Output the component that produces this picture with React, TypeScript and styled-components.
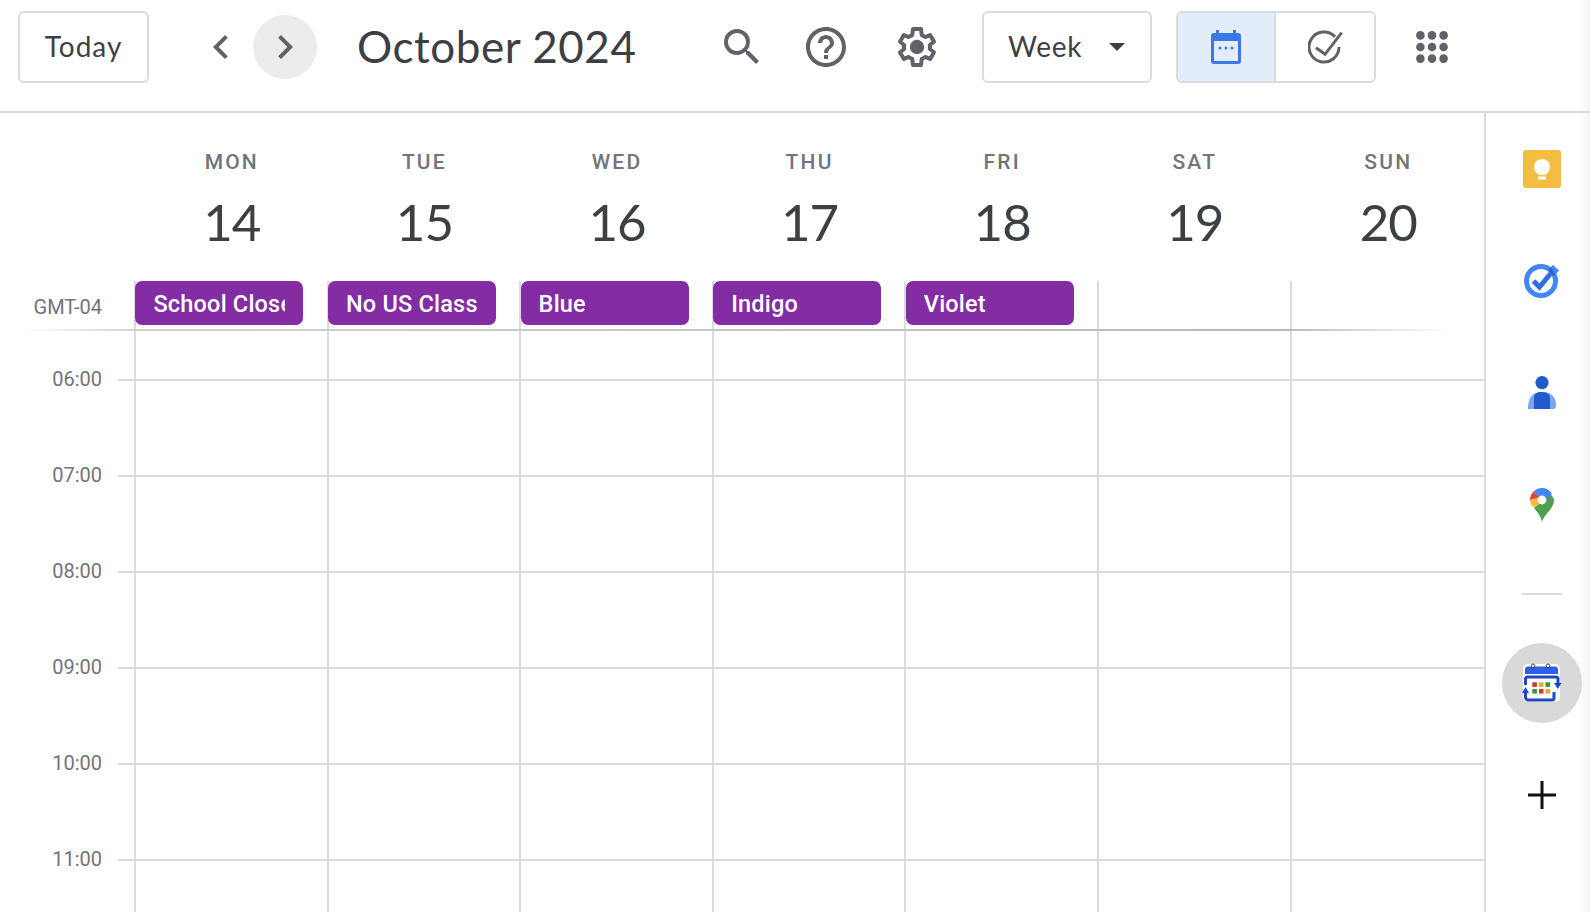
import React from 'react';
import styled, { createGlobalStyle } from 'styled-components';
import { MdChevronLeft, MdChevronRight, MdHelpOutline, MdSearch } from 'react-icons/md';

const GlobalStyle = createGlobalStyle`
  html, body {
    margin: 0;
    padding: 0;
    background: #fff;
    font-family: 'Roboto', 'Liberation Sans', sans-serif;
    overflow: hidden;
  }
`;

const lineColor = `#dadbe1`;
const edgeFade = `linear-gradient(to right, transparent calc(100% - 12px), #f4f4f4)`;
const weekColumns = `134px repeat(6, 192.6px) 1fr`;

const Page = styled.div`
  display: flex;
  flex-direction: column;
  width: 1590px;
  height: 912px;
  overflow: hidden;
`;

const TopBar = styled.header`
  display: flex;
  align-items: center;
  flex: none;
  box-sizing: border-box;
  height: 113px;
  padding: 0 0 17px 18px;
  border-bottom: 2px solid ${lineColor};
  background: ${edgeFade};
`;

const OutlineButton = styled.div<{ $width: number; $gapLeft?: number }>`
  display: flex;
  align-items: center;
  box-sizing: border-box;
  width: ${({ $width }) => $width}px;
  height: 72px;
  margin-left: ${({ $gapLeft = 0 }) => $gapLeft}px;
  border: 2px solid ${lineColor};
  border-radius: 6px;
  color: #3c4043;
  font-family: 'Lato', sans-serif;
  font-size: 28px;
`;

const TodayLabel = styled.span`
  margin: 0 auto 2px;
  letter-spacing: 1px;
`;

const WeekLabel = styled.span`
  margin: 0 0 2px 24px;
  letter-spacing: 0.75px;
`;

const Caret = styled.span`
  margin-left: auto;
  margin-right: 25px;
  width: 0;
  height: 0;
  border-left: 8px solid transparent;
  border-right: 8px solid transparent;
  border-top: 8px solid #3c4043;
`;

const NavButton = styled.div<{ $hover?: boolean; $gapLeft?: number }>`
  display: flex;
  align-items: center;
  justify-content: center;
  width: 64px;
  height: 64px;
  margin-left: ${({ $gapLeft = 0 }) => $gapLeft}px;
  border-radius: 50%;
  color: #5f6368;
  font-size: 48px;
  background: ${({ $hover }) => ($hover ? `#ececec` : `transparent`)};
`;

const Title = styled.h1`
  width: 361px;
  margin: 0 0 2px 40px;
  color: #3c4043;
  font-family: 'Lato', sans-serif;
  font-size: 44px;
  font-weight: 400;
  letter-spacing: 0.55px;
  white-space: nowrap;
`;

const IconButton = styled.div<{ $gapLeft: number }>`
  display: flex;
  align-items: center;
  width: 48px;
  height: 48px;
  margin-left: ${({ $gapLeft }) => $gapLeft}px;
  color: #5f6368;
  font-size: 48px;
`;

const Segmented = styled.div`
  display: flex;
  box-sizing: border-box;
  width: 200px;
  height: 72px;
  margin-left: 24px;
  border: 2px solid ${lineColor};
  border-radius: 6px;
  overflow: hidden;
`;

const Segment = styled.div<{ $active?: boolean }>`
  display: flex;
  align-items: center;
  justify-content: center;
  flex: ${({ $active }) => ($active ? `0 0 96px` : `1`)};
  background: ${({ $active }) => ($active ? `#e3edf9` : `#fff`)};
  & + & {
    border-left: 2px solid ${lineColor};
  }
`;

const Body = styled.div`
  display: flex;
  flex: 1;
  min-height: 0;
`;

const Main = styled.main`
  flex: none;
  width: 1484px;
`;

const DayHeader = styled.div`
  display: grid;
  grid-template-columns: ${weekColumns};
  height: 168px;
`;

const DayHead = styled.div`
  display: flex;
  flex-direction: column;
  align-items: center;
  padding: 37px 0 0 3px;
`;

const DayName = styled.div`
  color: #70757a;
  font-size: 21px;
  font-weight: 500;
  line-height: 24px;
  letter-spacing: 2.2px;
`;

const DayNumber = styled.div`
  margin-top: 18px;
  color: #3c4043;
  font-family: 'Lato', sans-serif;
  font-size: 51px;
  line-height: 60px;
  letter-spacing: -1px;
`;

const AllDayRow = styled.div`
  position: relative;
  display: grid;
  grid-template-columns: ${weekColumns};
  height: 49px;
  &::after {
    content: '';
    position: absolute;
    left: 22px;
    right: 32px;
    bottom: -1px;
    height: 2px;
    background: linear-gradient(
      to right,
      transparent,
      #d2d2d5 8%,
      #c6c6ca 50%,
      #b8b8bc 88%,
      transparent
    );
  }
`;

const ZoneLabel = styled.div`
  box-sizing: border-box;
  width: 102px;
  padding-top: 13px;
  color: #70757a;
  font-size: 20px;
  line-height: 26px;
  text-align: right;
`;

const DayCell = styled.div`
  border-left: 2px solid ${lineColor};
`;

const EventChip = styled.div`
  box-sizing: border-box;
  width: 168px;
  height: 44px;
  margin-left: -0.6px;
  padding: 0 18px;
  border-radius: 7px;
  background: #832ca3;
  color: #fff;
  font-size: 23.5px;
  font-weight: 500;
  line-height: 46px;
  letter-spacing: 0.2px;
`;

const EventText = styled.div`
  overflow: hidden;
  white-space: nowrap;
`;

const HourRow = styled.div<{ $height: number }>`
  display: grid;
  grid-template-columns: ${weekColumns};
  height: ${({ $height }) => $height}px;
`;

const HourGutter = styled.div`
  display: flex;
  align-items: flex-start;
`;

const HourLabel = styled.div`
  flex: none;
  width: 102px;
  margin-top: -13px;
  color: #70757a;
  font-size: 20px;
  line-height: 26px;
  text-align: right;
`;

const HourTick = styled.div`
  flex: 1;
  margin-left: 16px;
  border-top: 2px solid ${lineColor};
`;

const HourCell = styled.div<{ $lined: boolean }>`
  border-left: 2px solid ${lineColor};
  border-top: ${({ $lined }) => ($lined ? `2px solid ${lineColor}` : `none`)};
`;

const SidePanel = styled.aside`
  display: flex;
  flex-direction: column;
  align-items: center;
  flex: none;
  box-sizing: border-box;
  width: 106px;
  border-left: 2px solid ${lineColor};
  padding: 36px 0 0 8px;
  background: ${edgeFade};
`;

const SideSlot = styled.div<{ $gapTop?: number }>`
  display: flex;
  align-items: center;
  justify-content: center;
  height: 40px;
  margin-top: ${({ $gapTop = 0 }) => $gapTop}px;
`;

const SideDivider = styled.div`
  flex: none;
  width: 40px;
  height: 2px;
  margin: 68px 0 48px;
  background: ${lineColor};
`;

const ActiveAddon = styled.div`
  display: flex;
  align-items: center;
  justify-content: center;
  flex: none;
  width: 80px;
  height: 80px;
  border-radius: 50%;
  background: #d9d9d9;
`;

const days = [
  { name: `MON`, date: 14, event: `School Closed` },
  { name: `TUE`, date: 15, event: `No US Class` },
  { name: `WED`, date: 16, event: `Blue` },
  { name: `THU`, date: 17, event: `Indigo` },
  { name: `FRI`, date: 18, event: `Violet` },
  { name: `SAT`, date: 19 },
  { name: `SUN`, date: 20 },
];

const hours = [`06:00`, `07:00`, `08:00`, `09:00`, `10:00`, `11:00`];

function GearIcon() {
  return (
    <svg width="48" height="48" viewBox="0 0 24 24">
      <path
        fill="none"
        stroke="#5f6368"
        strokeWidth="2"
        strokeLinejoin="round"
        d="M18.4 12.98c.06-.32.1-.64.1-.98s-.04-.66-.1-.98l2.1-1.65-1.94-3.36-2.49 1c-.52-.4-1.08-.73-1.69-.98L14 3h-4l-.38 3.03c-.61.25-1.17.59-1.69.98l-2.49-1L3.5 9.37l2.1 1.65c-.06.32-.1.65-.1.98s.04.66.1.98L3.5 14.63l1.94 3.36 2.49-1c.52.4 1.08.73 1.69.98L10 21h4l.38-3.03c.61-.25 1.17-.59 1.69-.98l2.49 1 1.94-3.36z"
      />
      <circle cx="12" cy="12" r="3.6" fill="#5f6368" />
    </svg>
  );
}

function AppsIcon() {
  const spots = [0, 1, 2];
  return (
    <svg width="32" height="32" viewBox="0 0 32 32">
      {spots.map((row) =>
        spots.map((col) => (
          <circle
            key={`${row}-${col}`}
            cx={4.4 + col * 11.6}
            cy={4.4 + row * 11.6}
            r="4.3"
            fill="#5f6368"
          />
        )),
      )}
    </svg>
  );
}

function CalendarIcon() {
  return (
    <svg width="30" height="34" viewBox="0 0 30 34">
      <rect x="5" y="0" width="3" height="6" fill="#3b78e7" />
      <rect x="22" y="0" width="3" height="6" fill="#3b78e7" />
      <path
        fill="#3b78e7"
        d="M3 3h24a3 3 0 0 1 3 3v25a3 3 0 0 1-3 3H3a3 3 0 0 1-3-3V6a3 3 0 0 1 3-3z"
      />
      <rect x="3" y="11" width="24" height="20" fill="#e3edf9" />
      <circle cx="9" cy="18" r="1.5" fill="#3b78e7" />
      <circle cx="15" cy="18" r="1.5" fill="#3b78e7" />
      <circle cx="21" cy="18" r="1.5" fill="#3b78e7" />
    </svg>
  );
}

function TaskToggleIcon() {
  return (
    <svg width="35" height="34" viewBox="0 0 35 34">
      <path
        fill="none"
        stroke="#5f6368"
        strokeWidth="3"
        d="M27 6.8A15 15 0 1 0 31 17"
      />
      <path
        fill="none"
        stroke="#5f6368"
        strokeWidth="3"
        d="M8 17.7l9 6.6L33.7 2.7"
      />
    </svg>
  );
}

function KeepIcon() {
  return (
    <svg width="38" height="38" viewBox="0 0 38 38">
      <rect width="38" height="38" rx="3" fill="#f4bc41" />
      <circle cx="19" cy="17" r="8" fill="#fff" />
      <rect x="15" y="21" width="8" height="4" fill="#fff" />
      <rect x="15" y="26.5" width="8" height="3" fill="#fff" />
    </svg>
  );
}

function TasksIcon() {
  return (
    <svg width="36" height="36" viewBox="0 0 36 36">
      <circle cx="17" cy="19" r="14.5" fill="none" stroke="#4285f4" strokeWidth="5" />
      <path d="M9.5 19l6 6L28 10" fill="none" stroke="#2f6fe0" strokeWidth="5" />
      <path d="M24 8l5-5 6 5.5-5 5.5z" fill="#4285f4" />
      <path d="M24 8l3-3 4 8-1 1z" fill="#2a63c9" />
    </svg>
  );
}

function ContactsIcon() {
  return (
    <svg width="28" height="33" viewBox="0 0 28 33">
      <circle cx="14" cy="6.6" r="6.6" fill="#1f5bcf" />
      <path
        fill="#7fa4f0"
        d="M0 33c0-10 3-17 14-17s14 7 14 13c0 3-1 4-4 4z"
      />
      <path
        fill="#1f5bcf"
        d="M6 33V21c0-3 3-5 8-5 6 0 8 3 8 6v11z"
      />
    </svg>
  );
}

function MapsIcon() {
  return (
    <svg width="24" height="34" viewBox="0 0 24 34">
      <path fill="#4e9f50" d="M12 34c-1-6-5-10-8-14l16-14c3 2 4 5 4 6 0 9-10 14-12 22z" />
      <path fill="#f4bc41" d="M4 20C2 18 0 15 0 12l8-3 5 4z" />
      <path fill="#d9483b" d="M0 12c0-3 1-6 3.5-8.5L10 9z" />
      <path fill="#4285f4" d="M3.5 3.5C6 1 9 0 12 0s7 1 10 6l-8 7z" />
      <circle cx="12" cy="12" r="4.4" fill="#fff" />
    </svg>
  );
}

function AddonIcon() {
  const squares = [`#d0372d`, `#f2a62e`, `#3e9142`, `#3e9142`, `#d0372d`, `#f2a62e`];
  return (
    <svg width="40" height="40" viewBox="0 0 40 40">
      <rect width="37" height="38" x="1" y="1" rx="5" fill="#fff" />
      <path fill="#2f5fe8" d="M6 3.5h27a3 3 0 0 1 3 3V11H3V6.5a3 3 0 0 1 3-3z" />
      <circle cx="11" cy="2.8" r="1.8" fill="#fff" stroke="#222" strokeWidth="0.8" />
      <circle cx="26" cy="2.8" r="1.8" fill="#fff" stroke="#222" strokeWidth="0.8" />
      <path d="M3.5 22v-6a2 2 0 0 1 2-2H34a2 2 0 0 1 2 2v5" fill="none" stroke="#1f47c4" strokeWidth="3" />
      <path d="M32 20h7.5l-3.75 6z" fill="#1f47c4" />
      <path d="M3.5 28v6a3 3 0 0 0 3 3H30a2 2 0 0 0 2-2v-6" fill="none" stroke="#1f47c4" strokeWidth="3" />
      <path d="M0 30h7l-3.5-6z" fill="#1f47c4" />
      {squares.map((color, i) => (
        <rect
          key={i}
          x={10.3 + (i % 3) * 6.6}
          y={i < 3 ? 19.3 : 26}
          width="4.6"
          height="4.6"
          fill={color}
        />
      ))}
    </svg>
  );
}

function PlusIcon() {
  return (
    <svg width="28" height="28" viewBox="0 0 28 28">
      <path d="M14 0v28M0 14h28" stroke="#111" strokeWidth="3" />
    </svg>
  );
}

export default function App() {
  return (
    <Page>
      <GlobalStyle />
      <TopBar>
        <OutlineButton $width={131}>
          <TodayLabel>Today</TodayLabel>
        </OutlineButton>
        <NavButton $gapLeft={40}>
          <MdChevronLeft />
        </NavButton>
        <NavButton $hover>
          <MdChevronRight />
        </NavButton>
        <Title>October 2024</Title>
        <IconButton $gapLeft={0}>
          <MdSearch />
        </IconButton>
        <IconButton $gapLeft={36}>
          <MdHelpOutline />
        </IconButton>
        <IconButton $gapLeft={43}>
          <GearIcon />
        </IconButton>
        <OutlineButton $width={170} $gapLeft={41}>
          <WeekLabel>Week</WeekLabel>
          <Caret />
        </OutlineButton>
        <Segmented>
          <Segment $active>
            <CalendarIcon />
          </Segment>
          <Segment>
            <TaskToggleIcon />
          </Segment>
        </Segmented>
        <IconButton $gapLeft={40}>
          <AppsIcon />
        </IconButton>
      </TopBar>
      <Body>
        <Main>
          <DayHeader>
            <div />
            {days.map((day) => (
              <DayHead key={day.name}>
                <DayName>{day.name}</DayName>
                <DayNumber>{day.date}</DayNumber>
              </DayHead>
            ))}
          </DayHeader>
          <AllDayRow>
            <ZoneLabel>GMT-04</ZoneLabel>
            {days.map((day) => (
              <DayCell key={day.name}>
                {day.event && (
                  <EventChip>
                    <EventText>{day.event}</EventText>
                  </EventChip>
                )}
              </DayCell>
            ))}
          </AllDayRow>
          <HourRow $height={49}>
            <div />
            {days.map((day) => (
              <HourCell key={day.name} $lined={false} />
            ))}
          </HourRow>
          {hours.map((hour) => (
            <HourRow key={hour} $height={96}>
              <HourGutter>
                <HourLabel>{hour}</HourLabel>
                <HourTick />
              </HourGutter>
              {days.map((day) => (
                <HourCell key={day.name} $lined />
              ))}
            </HourRow>
          ))}
        </Main>
        <SidePanel>
          <SideSlot>
            <KeepIcon />
          </SideSlot>
          <SideSlot $gapTop={71}>
            <TasksIcon />
          </SideSlot>
          <SideSlot $gapTop={72}>
            <ContactsIcon />
          </SideSlot>
          <SideSlot $gapTop={73}>
            <MapsIcon />
          </SideSlot>
          <SideDivider />
          <ActiveAddon>
            <AddonIcon />
          </ActiveAddon>
          <SideSlot $gapTop={52}>
            <PlusIcon />
          </SideSlot>
        </SidePanel>
      </Body>
    </Page>
  );
}
